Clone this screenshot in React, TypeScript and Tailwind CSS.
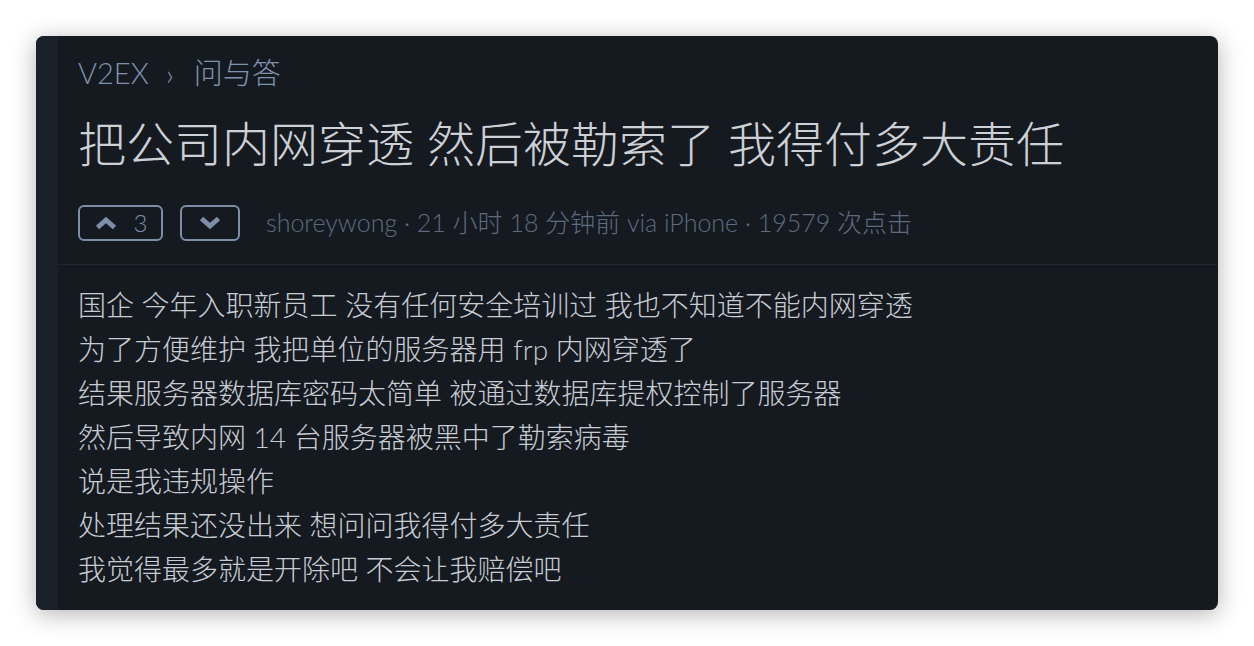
import React from 'react';

const font = { fontFamily: '"Lato", "Noto Sans CJK SC", sans-serif' };

const lines = [
  '国企 今年入职新员工 没有任何安全培训过 我也不知道不能内网穿透',
  '为了方便维护 我把单位的服务器用 frp 内网穿透了',
  '结果服务器数据库密码太简单 被通过数据库提权控制了服务器',
  '然后导致内网 14 台服务器被黑中了勒索病毒',
  '说是我违规操作',
  '处理结果还没出来 想问问我得付多大责任',
  '我觉得最多就是开除吧 不会让我赔偿吧',
];

const Caret: React.FC<{ down?: boolean }> = ({ down }) => (
  <svg width="24" height="14" viewBox="0 0 24 14" className={down ? 'rotate-180' : ''}>
    <path d="M3.5 11.5 L12 4 L20.5 11.5" fill="none" stroke="#7d8ea8" strokeWidth="5" strokeLinejoin="miter" />
  </svg>
);

export default function App() {
  return (
    <div className="w-[1254px] h-[646px] bg-white p-[36px]" style={font}>
      <div className="flex h-[574px] w-[1182px] rounded-lg overflow-hidden bg-[#151a21] shadow-[0_4px_24px_rgba(0,0,0,0.3)]">
        <div className="w-[22px] shrink-0 bg-[#1a212b]" />
        <div className="flex-1 flex flex-col">
          <div className="pl-[20px] pt-[17px]">
            <div className="flex items-center text-[29px] leading-[40px] font-light text-[#7e91ac]">
              <span>V2EX</span>
              <span className="ml-[17px] mr-[20px] text-[30px]">›</span>
              <span>问与答</span>
            </div>
            <h1 className="mt-[21px] text-[48px] leading-[60px] font-light text-[#cdd0d4]">
              把公司内网穿透 然后被勒索了 我得付多大责任
            </h1>
            <div className="mt-[30px] flex items-center pb-[22px]">
              <button className="flex items-center justify-center gap-[16px] w-[85px] h-[36px] rounded-[6px] border-2 border-[#7d8ea8] text-[#7d8ea8] text-[24px] font-light">
                <Caret />
                <span className="leading-none">3</span>
              </button>
              <button className="ml-[17px] flex items-center justify-center w-[60px] h-[36px] rounded-[6px] border-2 border-[#7d8ea8]">
                <Caret down />
              </button>
              <span className="ml-[26px] text-[25px] font-light text-[#5d6b7e]">
                shoreywong · 21 小时 18 分钟前 via iPhone · 19579 次点击
              </span>
            </div>
          </div>
          <div className="h-px bg-[#1f2631]" />
          <div className="pl-[20px] pt-[18px] text-[28px] leading-[44px] font-light text-[#c8ccd2]">
            {lines.map((l, i) => (
              <div key={i}>{l}</div>
            ))}
          </div>
        </div>
      </div>
    </div>
  );
}
